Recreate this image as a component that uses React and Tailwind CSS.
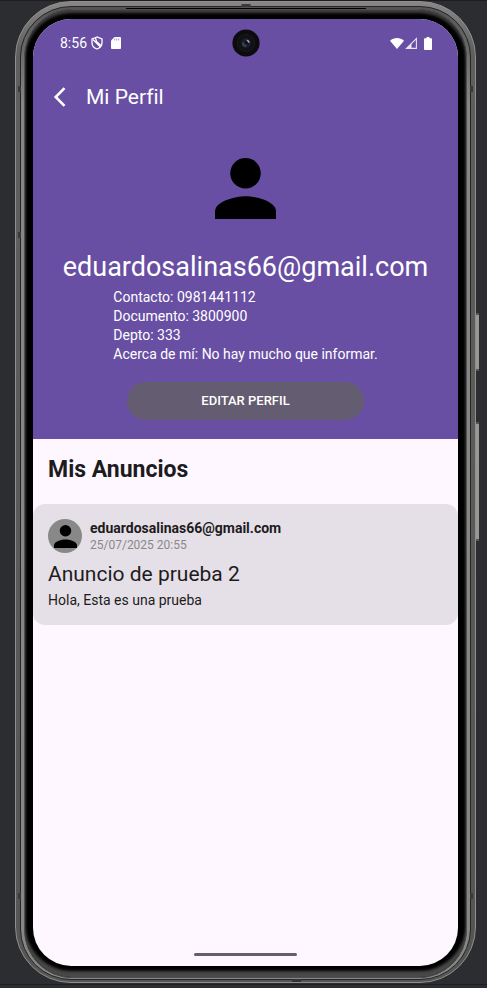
import React from "react";

function Person({ className }) {
  return (
    <svg viewBox="0 0 16 16" className={className} fill="#000" aria-hidden="true">
      <circle cx="8" cy="4" r="4" />
      <path d="M8 10c-2.67 0-8 1.34-8 4v2h16v-2c0-2.66-5.33-4-8-4z" />
    </svg>
  );
}

function Camera() {
  return (
    <svg viewBox="0 0 28 28" className="absolute top-[10px] left-1/2 size-7 -translate-x-1/2" aria-hidden="true">
      <circle cx="14" cy="14" r="13.6" fill="#0c0c0e" />
      <circle cx="14" cy="14" r="8.6" fill="#111113" stroke="#1d1d1f" strokeWidth="0.8" />
      <circle cx="14" cy="14" r="5" fill="#1c1c28" />
      <path d="M10 14a4 4 0 0 0 4 4l1-3-3-2z" fill="#314550" />
      <path d="M14 10.500l3 1 .8 2.500-1.600-.4z" fill="#b79bd0" />
      <circle cx="14" cy="14" r="1.800" fill="#11111a" />
    </svg>
  );
}

function StatusBar() {
  return (
    <div className="flex h-12 items-center pr-[26px] pl-[27px] text-white">
      <span className="text-sm leading-4">8:56</span>
      <svg viewBox="0 0 12 14" className="ml-1 h-[14px] w-3" fill="none" stroke="#fff" strokeWidth="1.3" aria-hidden="true">
        <path d="M6 1L1 3v3.500C1 9.500 3 12 6 13c3-1 5-3.500 5-6.500V3z" />
        <path d="M2 3.500l7.500 7.500M4.500 2l1 3.500 4.500 4" />
      </svg>
      <svg viewBox="0 0 10 12" className="ml-2 h-3 w-[10px]" aria-hidden="true">
        <path d="M3.500 0H9a1 1 0 0 1 1 1v10a1 1 0 0 1-1 1H1a1 1 0 0 1-1-1V3.500z" fill="#fff" />
        <path d="M3.700 1.500v2M5.700 1.500v2M7.700 1.500v2" stroke="#9d8cc4" strokeWidth="0.9" />
      </svg>
      <svg viewBox="0 0 14 11" className="ml-auto h-[11px] w-[14px]" fill="#fff" aria-hidden="true">
        <path d="M7 11L0 2.700C2 .9 4.300 0 7 0s5 .9 7 2.700z" />
      </svg>
      <svg viewBox="0 0 12 12" className="ml-px h-3 w-3" aria-hidden="true">
        <path d="M1.500 11.400L11.400 1.500v9.900z" fill="none" stroke="#e9e4f2" strokeWidth="1.1" />
        <path d="M1 12L6.500 6.500V12z" fill="#e9e4f2" />
      </svg>
      <svg viewBox="0 0 8 13" className="ml-[7px] h-[13px] w-2" fill="#fff" aria-hidden="true">
        <path d="M2.500 0h3v1.200H7.200a.8.8 0 0 1 .8.8v10.200a.8.8 0 0 1-.8.8H.8a.8.8 0 0 1-.8-.8V2a.8.8 0 0 1 .8-.8h1.700z" />
      </svg>
    </div>
  );
}

function Announcement() {
  return (
    <article className="rounded-xl bg-[#e5e0e7] px-[15px] pt-[15px] pb-[15px]">
      <div className="flex items-center gap-2">
        <div className="flex size-[34px] items-center justify-center rounded-full bg-[#888]">
          <Person className="size-[23px]" />
        </div>
        <div>
          <p className="text-sm leading-[18px] font-bold">eduardosalinas66@gmail.com</p>
          <p className="text-xs leading-4 text-[#888]">25/07/2025 20:55</p>
        </div>
      </div>
      <h3 className="mt-2 text-[21px] leading-[26px]">Anuncio de prueba 2</h3>
      <p className="mt-1 text-sm leading-[19px]">Hola, Esta es una prueba</p>
    </article>
  );
}

function FrameDetails() {
  return (
    <>
      <div className="absolute top-[312px] -right-[3px] h-[58px] w-[3px] border-y-2 border-[#555] bg-[#999894]" />
      <div className="absolute top-[421px] -right-[3px] h-[119px] w-[3px] border-y-2 border-[#555] bg-[#999894]" />
      <div className="absolute top-[85px] left-[3px] h-[6px] w-[3px] bg-[#3a3a3a]" />
      <div className="absolute top-[231px] left-[3px] h-[6px] w-[3px] bg-[#3a3a3a]" />
      <div className="absolute bottom-[84px] left-[3px] h-[6px] w-[3px] bg-[#3a3a3a]" />
      <div className="absolute top-[85px] right-[3px] h-[6px] w-[3px] bg-[#3a3a3a]" />
      <div className="absolute right-[3px] bottom-[84px] h-[6px] w-[3px] bg-[#3a3a3a]" />
      <div className="absolute top-[3px] left-1/2 h-[3px] w-[9px] -translate-x-1/2 bg-[#3a3838]" />
      <div className="absolute top-[7px] left-1/2 h-px w-[240px] -translate-x-1/2 bg-black" />
      <div className="absolute bottom-px left-[60%] h-[3px] w-[9px] bg-[#333]" />
    </>
  );
}

export default function App() {
  return (
    <div className="flex min-h-screen flex-col border-t border-[#1e1d22] bg-[#2b2d30] font-[Roboto,sans-serif] [font-variant-ligatures:none]">
      <div className="relative mr-[11px] ml-[15px] flex grow flex-col">
        <div className="flex grow flex-col rounded-[56px] border border-[#8f8f8d] bg-linear-to-b from-[#8a8688] via-[#5f605e] via-5% to-[#555654] p-1 pb-[2px]">
          <div className="flex grow flex-col rounded-[51px] border border-[#252525] bg-linear-to-b from-[#555] via-[#868686] via-10% to-[#868686] px-[3px] pt-[2px] pb-px">
            <div className="flex grow flex-col rounded-[48px] border border-[#505050] bg-black px-2 pt-[9px] pb-[11px] shadow-[inset_0_3px_3px_#404040,inset_0_-6px_3px_#484848]">
              <main className="relative flex grow flex-col overflow-hidden rounded-[38px] bg-[#fef7ff] text-[#1d1b20]">
                <header className="bg-[#684fa3] pb-[19px] text-white">
                  <StatusBar />
                  <Camera />
                  <div className="flex h-[60px] items-center gap-5 pl-5">
                    <button type="button" aria-label="Volver">
                      <svg viewBox="0 0 13 20" className="h-5 w-[13px]" fill="none" stroke="#fff" strokeWidth="2.6" aria-hidden="true">
                        <path d="M11.500 1.200L2.700 10l8.800 8.800" />
                      </svg>
                    </button>
                    <h1 className="text-[21px] leading-7">Mi Perfil</h1>
                  </div>
                  <div className="flex flex-col items-center pt-[31px]">
                    <Person className="size-[61px]" />
                    <h2 className="mt-[30px] text-[27px] leading-9">eduardosalinas66@gmail.com</h2>
                    <div className="mt-[3px] text-sm leading-[19px]">
                      <p>Contacto: 0981441112</p>
                      <p>Documento: 3800900</p>
                      <p>Depto: 333</p>
                      <p>Acerca de mí: No hay mucho que informar.</p>
                    </div>
                    <button type="button" className="mt-[18px] h-[38px] w-[237px] rounded-full bg-[#645c71] text-[13px] font-medium">
                      EDITAR PERFIL
                    </button>
                  </div>
                </header>
                <h2 className="px-[15px] pt-[17px] pb-5 text-[23px] leading-7 font-bold">Mis Anuncios</h2>
                <Announcement />
                <div className="mx-auto mt-auto mb-[10px] h-[3px] w-[103px] rounded-full bg-[#665f69]" />
              </main>
            </div>
          </div>
        </div>
        <FrameDetails />
      </div>
      <div className="mt-px h-1 border-t border-[#1e1f22] bg-[#2b2d30]" />
    </div>
  );
}
